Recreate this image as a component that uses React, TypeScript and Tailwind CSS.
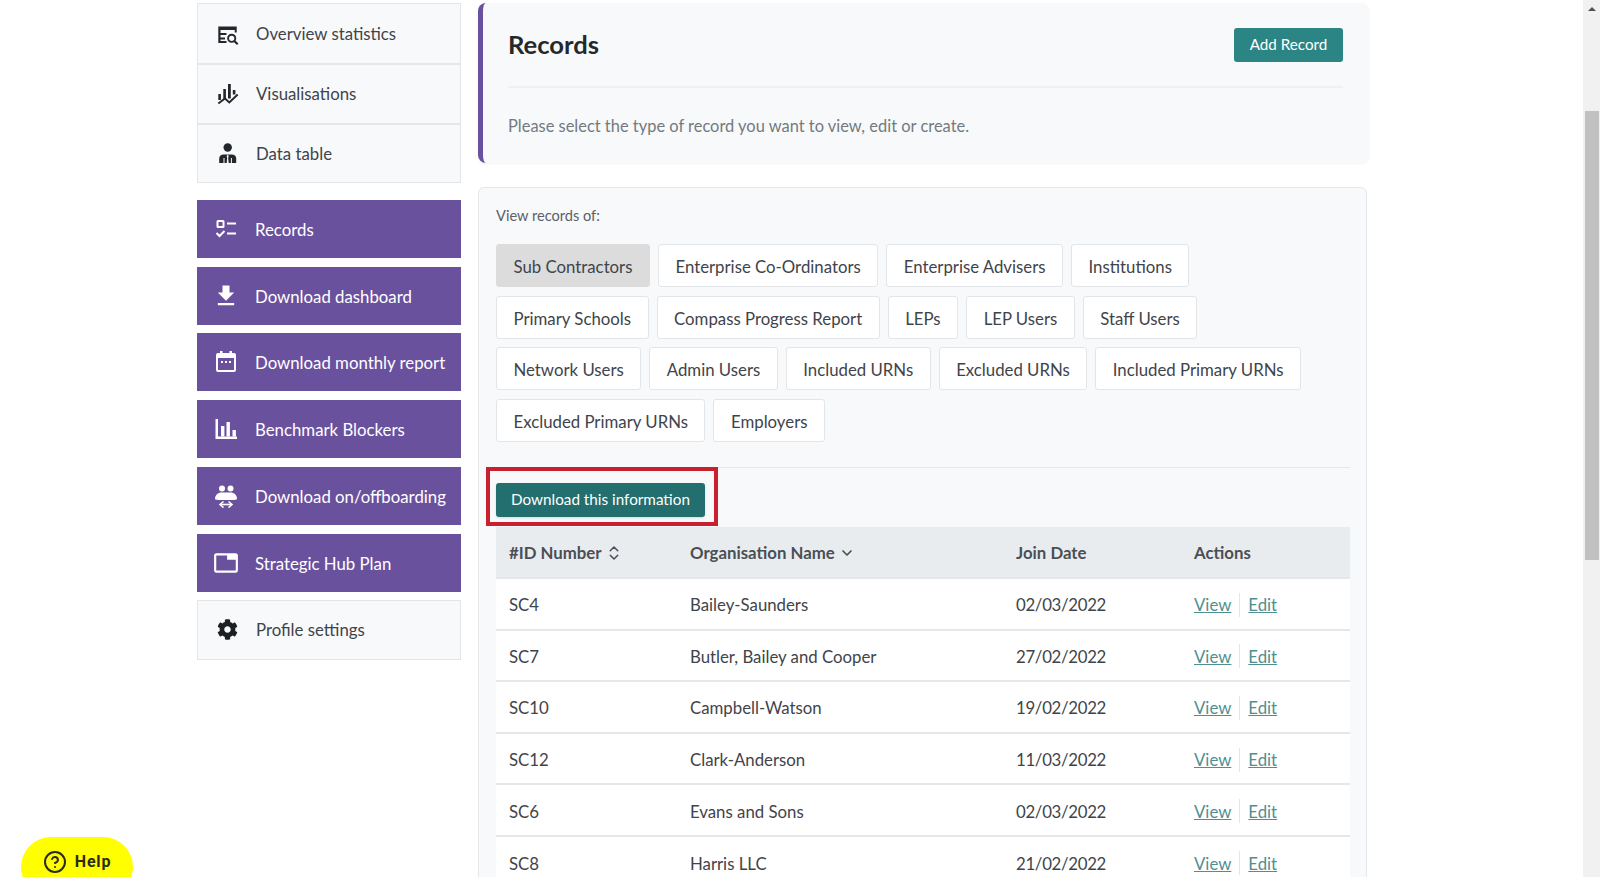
import React from "react";
import { ChevronDown, ChevronsUpDown, CircleHelp } from "lucide-react";
import { FaCog } from "react-icons/fa";
import { MdFileDownload, MdTab } from "react-icons/md";

const OverviewIcon = () => (
  <svg viewBox="0 0 24 24" className="w-6 h-6" fill="#23272b">
    <path d="M2.300 4.500h18.400v6h-2V8H2.300z" />
    <path d="M2.300 8h2.200v3h6v2H4.500v2.500h4.500v2H4.500V19h6v2H2.300z" />
    <circle cx="15.700" cy="16.300" r="3.600" fill="none" stroke="#23272b" strokeWidth="1.900" />
    <path d="M18.300 19l3.400 3.300" stroke="#23272b" strokeWidth="2.100" />
  </svg>
);

const VisualIcon = () => (
  <svg viewBox="0 0 24 24" className="w-6 h-6" fill="#23272b">
    <rect x="2.300" y="12" width="2.600" height="6" />
    <rect x="7.300" y="7" width="2.600" height="10" />
    <rect x="12" y="2" width="2.800" height="14.500" />
    <rect x="16.800" y="8" width="2.600" height="4.500" />
    <path d="M2.300 21.500l6.700-5 4.300 4 8.400-8" fill="none" stroke="#23272b" strokeWidth="1.900" />
  </svg>
);

const TableIcon = () => (
  <svg viewBox="0 0 24 24" className="w-6 h-6" fill="#23272b">
    <circle cx="11.700" cy="6.500" r="4.200" />
    <path d="M3.200 22v-4.500c0-2.400 2-4 4.300-4h8.400c2.300 0 4.300 1.600 4.300 4V22z" />
    <path d="M8 17v5M15.400 17v5" stroke="#f8f9fa" strokeWidth="1" />
    <path d="M11.700 13.500l-1 1.500.5 2-.5 5h2l-.5-5 .5-2z" fill="#f8f9fa" />
  </svg>
);

const RecordsIcon = () => (
  <svg viewBox="0 0 24 24" className="w-6 h-6" fill="none" stroke="#fff" strokeWidth="2">
    <rect x="3.500" y="4" width="6" height="6" rx="0.500" />
    <path d="M13 6.500h9M13 16.500h9M2.500 16l3 3 5-5" />
  </svg>
);

const CalendarIcon = () => (
  <svg viewBox="0 0 24 24" className="w-6 h-6" fill="#fff">
    <path d="M6 1h2.500v2h7V1H18v2h2a2 2 0 0 1 2 2v15a2 2 0 0 1-2 2H4a2 2 0 0 1-2-2V5a2 2 0 0 1 2-2h2zM4 8v12h16V8z" />
    <rect x="7" y="11" width="2" height="2" />
    <rect x="11" y="11" width="2" height="2" />
    <rect x="15" y="11" width="2" height="2" />
  </svg>
);

const BarsIcon = () => (
  <svg viewBox="0 0 24 24" className="w-6 h-6" fill="#fff">
    <path d="M1.500 2H4v17.500h19V22H1.500z" />
    <rect x="7" y="9" width="3.400" height="10.500" />
    <rect x="12.500" y="5" width="3.400" height="14.500" />
    <rect x="18.500" y="13" width="3.400" height="6.500" />
  </svg>
);

const OnboardIcon = () => (
  <svg viewBox="0 0 24 24" className="w-6 h-6" fill="#fff">
    <circle cx="8" cy="4.500" r="3" />
    <circle cx="16.500" cy="4.500" r="3" />
    <path d="M1 15c0-4 3-6.500 6.500-6.500h9C20 8.500 23 11 23 15c0 .6-3 1-5 1H6c-2 0-5-.4-5-1z" />
    <path d="M7 20.500h10" stroke="#fff" strokeWidth="1.600" />
    <path d="M9.500 17.500l-3.500 3 3.500 3M14.500 17.500l3.500 3-3.500 3" fill="none" stroke="#fff" strokeWidth="1.600" />
  </svg>
);

const lightTop = [
  { label: "Overview statistics", icon: <OverviewIcon /> },
  { label: "Visualisations", icon: <VisualIcon /> },
  { label: "Data table", icon: <TableIcon /> },
];

const purpleLinks = [
  { label: "Records", icon: <RecordsIcon /> },
  { label: "Download dashboard", icon: <MdFileDownload className="w-7 h-7 -mx-0.5" color="#fff" /> },
  { label: "Download monthly report", icon: <CalendarIcon /> },
  { label: "Benchmark Blockers", icon: <BarsIcon /> },
  { label: "Download on/offboarding", icon: <OnboardIcon /> },
  { label: "Strategic Hub Plan", icon: <MdTab className="w-[26px] h-[26px] -mx-px" color="#fff" /> },
];

const tabs = [
  ["Sub Contractors", "Enterprise Co-Ordinators", "Enterprise Advisers", "Institutions"],
  ["Primary Schools", "Compass Progress Report", "LEPs", "LEP Users", "Staff Users"],
  ["Network Users", "Admin Users", "Included URNs", "Excluded URNs", "Included Primary URNs"],
  ["Excluded Primary URNs", "Employers"],
];

const rows = [
  ["SC4", "Bailey-Saunders", "02/03/2022"],
  ["SC7", "Butler, Bailey and Cooper", "27/02/2022"],
  ["SC10", "Campbell-Watson", "19/02/2022"],
  ["SC12", "Clark-Anderson", "11/03/2022"],
  ["SC6", "Evans and Sons", "02/03/2022"],
  ["SC8", "Harris LLC", "21/02/2022"],
];

const App = () => {
  return (
    <div className="relative flex h-screen w-full overflow-hidden bg-white font-['Lato',sans-serif] text-[16.800px] text-[#3f444a]">
      <div className="flex flex-1 items-start overflow-hidden pl-[197px] pt-[3px]">
        {/* sidebar */}
        <aside className="w-[264px] shrink-0">
          <div className="border border-[#e3e6e9] bg-[#f8f9fa]">
            {lightTop.map((item, i) => (
              <div
                key={item.label}
                className={`flex h-[59.300px] items-center pl-[18px] ${i > 0 ? "border-t-2 border-[#e5e7ea]" : ""}`}
              >
                <span className="mr-[16px] flex">{item.icon}</span>
                {item.label}
              </div>
            ))}
          </div>
          <div className="mt-[17px] flex flex-col gap-[8.800px]">
            {purpleLinks.map((item) => (
              <div key={item.label} className="flex h-[58px] items-center bg-[#6a519e] pl-[17px] text-white">
                <span className="mr-[17px] flex">{item.icon}</span>
                <span className="pt-[1px]">{item.label}</span>
              </div>
            ))}
          </div>
          <div className="mt-[8px] flex h-[60px] items-center border border-[#e3e6e9] bg-[#f8f9fa] pl-[18px]">
            <span className="mr-[18px] flex w-[22px] justify-center">
              <FaCog className="w-[21px] h-[21px]" color="#1c1f22" />
            </span>
            Profile settings
          </div>
        </aside>

        {/* main */}
        <main className="ml-[17px] w-[891px] shrink-0">
          <div className="h-[160px] rounded-lg border-l-[5px] border-[#6a519e] bg-[#f8f9fa] pl-[25px] pr-[26px] shadow-[0_1px_3px_rgba(0,0,0,0.05)]">
            <div className="flex h-[85px] items-center justify-between border-b-2 border-[#eef0f2]">
              <h1 className="-mt-[1px] text-[25.600px] font-bold text-[#26292c]">Records</h1>
              <button className="h-[34px] w-[109px] rounded-[3px] bg-[#2b8585] text-[15.200px] text-white">Add Record</button>
            </div>
            <p className="pt-[26px] text-[16.450px] text-[#73797f]">Please select the type of record you want to view, edit or create.</p>
          </div>

          <div className="mt-[24px] w-[889px] rounded-t-md border border-[#e5e7ea] bg-[#f8f9fa] pl-[17px] pr-[16px] pt-[17px]">
            <div className="text-[14.600px] leading-[22px] text-[#5b6167]">View records of:</div>
            <div className="mt-[17px] flex flex-col gap-[8.700px] border-b border-[#e6e8eb] pb-[25px]">
              {tabs.map((row, r) => (
                <div key={r} className="flex gap-[8px]">
                  {row.map((t) => (
                    <div
                      key={t}
                      className={`flex h-[43px] items-center rounded-[3px] border px-[16.500px] pt-[2px] ${t === "Sub Contractors" ? "border-[#dcdcdc] bg-[#dcdcdc]" : "border-[#e3e6e9] bg-white"}`}
                    >
                      {t}
                    </div>
                  ))}
                </div>
              ))}
            </div>

            <div className="relative h-[59px]">
              <button className="mt-[14.500px] h-[34px] w-[209px] rounded-[3px] bg-[#236e6e] text-[15.250px] text-white shadow-sm">
                Download this information
              </button>
              <div className="absolute -left-[10px] -top-[1px] h-[59px] w-[232px] border-4 border-[#c8202f]" />
            </div>

            <table className="w-full table-fixed border-collapse bg-white">
              <colgroup>
                <col className="w-[181px]" />
                <col className="w-[326px]" />
                <col className="w-[178px]" />
                <col />
              </colgroup>
              <thead>
                <tr className="h-[51px] bg-[#e9ecef] text-left font-bold text-[#4a4f55]">
                  <th className="pl-[13px] pt-[1px] font-bold">
                    <span className="flex items-center gap-[3px]">
                      #ID Number <ChevronsUpDown className="w-[18px] h-[18px]" strokeWidth={2} />
                    </span>
                  </th>
                  <th className="pl-[13px] pt-[1px] font-bold">
                    <span className="flex items-center gap-[4px]">
                      Organisation Name <ChevronDown className="w-4 h-4" strokeWidth={2.500} />
                    </span>
                  </th>
                  <th className="pl-[13px] pt-[1px] font-bold">Join Date</th>
                  <th className="pl-[13px] pt-[1px] font-bold">Actions</th>
                </tr>
              </thead>
              <tbody>
                {rows.map((row) => (
                  <tr key={row[0]} className="h-[51.600px] border-t-2 border-[#e5e7ea]">
                    <td className="pl-[13px] pt-[2px]">{row[0]}</td>
                    <td className="pl-[13px] pt-[2px]">{row[1]}</td>
                    <td className="pl-[13px] pt-[2px] tracking-[-0.3px]">{row[2]}</td>
                    <td className="pl-[13px] pt-[2px] text-[#4f8f8f]">
                      <span className="flex items-center">
                        <a className="underline">View</a>
                        <span className="mx-[8px] h-[24px] w-px bg-[#e3e6e9]" />
                        <a className="underline">Edit</a>
                      </span>
                    </td>
                  </tr>
                ))}
              </tbody>
            </table>
          </div>
        </main>
      </div>

      {/* browser scrollbar */}
      <div className="flex w-[17px] shrink-0 flex-col items-center bg-[#f1f1f1]">
        <div className="mt-[7px] h-0 w-0 border-x-[4px] border-b-[4px] border-x-transparent border-b-[#505050]" />
        <div className="mt-[100px] h-[449px] w-[14px] bg-[#c1c1c1]" />
      </div>

      {/* help */}
      <button className="absolute left-[21px] top-[837px] flex h-[60px] w-[112px] items-start justify-center gap-[8px] rounded-[30px] bg-[#ffff00] pt-[13px] font-['Roboto',sans-serif] text-[16px] font-bold tracking-[0.8px] text-[#2b2b1a]">
        <CircleHelp className="w-[24px] h-[24px]" strokeWidth={2} />
        Help
      </button>
    </div>
  );
};

export default App;
